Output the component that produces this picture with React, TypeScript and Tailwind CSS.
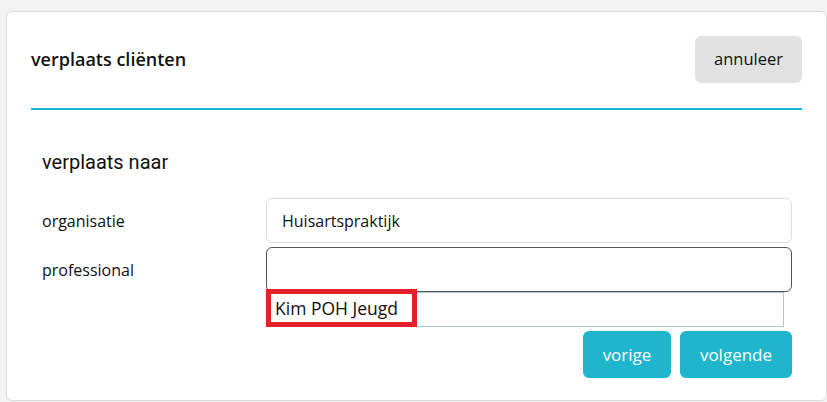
import React from 'react';

const sans = "font-['Open_Sans',_'Noto_Sans',_sans-serif]";

function FieldRow({ label, children }: { label: string, children: React.ReactNode }) {
    return (
        <div className="flex flex-row items-center">
            <div className="w-[224px] shrink-0 text-[16px] text-[#111]">{label}</div>
            <div className="flex-1">{children}</div>
        </div>
    );
}

export default function App() {
    return (
        <div className={`min-h-[402px] w-[827px] bg-[#f3f3f3] pl-[6px] pt-[11px] ${sans}`}>
            <div className="flex h-[390px] w-[821px] flex-col rounded-[6px] border border-[#dadada] bg-white px-[24px] pt-[24px]">
                <div className="flex flex-row items-center justify-between">
                    <h2 className="text-[18px] font-semibold text-[#111]">verplaats cliënten</h2>
                    <button className="h-[47px] w-[107px] rounded-[6px] bg-[#e2e2e2] text-[16.5px] text-[#111]">annuleer</button>
                </div>
                <div className="mt-[25px] h-[2px] bg-[#1eb6ce]" />
                <div className="pl-[11px] pr-[10px] pt-[37px]">
                    <h3 className="font-['Roboto',_sans-serif] text-[20px] text-[#111]">verplaats naar</h3>
                    <div className="mt-[21px] flex flex-col gap-[4px]">
                        <FieldRow label="organisatie">
                            <div className="flex h-[45px] items-center rounded-[6px] border border-[#dcdcdc] px-[15px] text-[16px] text-[#111]">Huisartspraktijk</div>
                        </FieldRow>
                        <FieldRow label="professional">
                            <div className="relative">
                                <div className="h-[45px] rounded-[6px] border border-[#555]" />
                                <div className="absolute left-0 top-full h-[35px] w-[518px] border border-[#a9c8dc] bg-white" />
                                <div className="absolute left-0 top-[42px] flex h-[38px] w-[151px] items-center border-[5px] border-[#e4212a] pl-[4px] text-[17.5px] text-[#111]">Kim POH Jeugd</div>
                            </div>
                        </FieldRow>
                    </div>
                    <div className="mt-[39px] flex flex-row justify-end gap-[9px]">
                        <button className="h-[47px] w-[88px] rounded-[6px] bg-[#1eb5cd] text-[17px] text-white">vorige</button>
                        <button className="h-[47px] w-[112px] rounded-[6px] bg-[#1eb5cd] text-[17px] text-white">volgende</button>
                    </div>
                </div>
            </div>
        </div>
    );
}
